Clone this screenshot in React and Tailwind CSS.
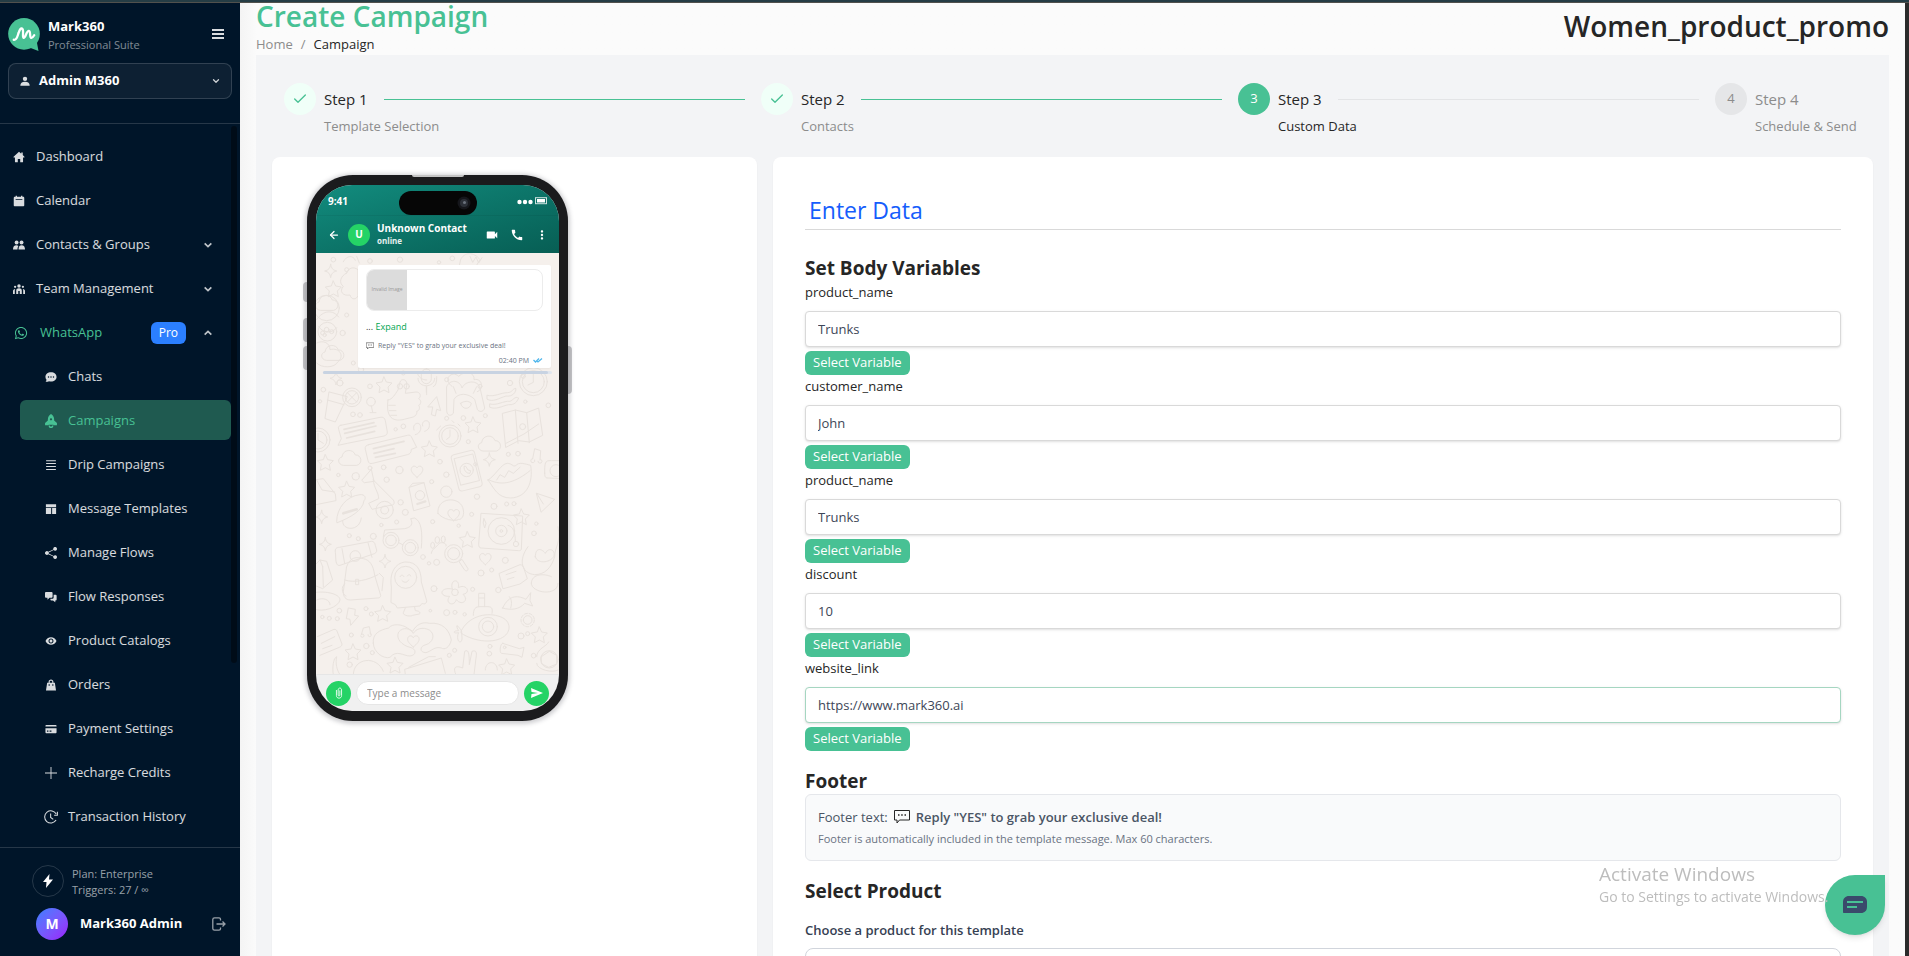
import React from 'react'
import { FaWhatsapp } from 'react-icons/fa'
import { BsShareFill } from 'react-icons/bs'
import { MdCall, MdMoreVert, MdVideocam, MdVisibility } from 'react-icons/md'
import { ArrowLeft, Check, ChevronDown } from 'lucide-react'

const Glyph = ({ children, className = 'h-3.5 w-3.5' }) => (
  <svg viewBox="0 0 16 16" fill="currentColor" className={`p-px ${className}`} aria-hidden="true">
    {children}
  </svg>
)

const HomeIcon = () => (
  <Glyph>
    <path d="M8 1 .8 7.600c-.4.4-.1 1 .4 1H2.600v5.600c0 .5.4.8.8.8h3V10.500h3.200V15h3c.5 0 .8-.4.8-.8V8.600h1.400c.5 0 .8-.6.4-1L13 5.400V2h-2v1.700z" />
  </Glyph>
)

const CalendarIcon = () => (
  <Glyph>
    <path
      fillRule="evenodd"
      d="M3.500 1h1.800v1.200h5.400V1h1.800v1.200h1c.8 0 1.500.7 1.500 1.500v9.800c0 .8-.7 1.500-1.500 1.500h-11c-.8 0-1.500-.7-1.500-1.500V3.700c0-.8.7-1.500 1.500-1.500h1zM3.500 5.500v1.300h9V5.500z"
    />
  </Glyph>
)

const UsersIcon = () => (
  <Glyph>
    <circle cx="4.800" cy="4.600" r="2.600" />
    <circle cx="11.400" cy="4.600" r="2.600" />
    <path d="M0 14c0-3.600 1.600-5.600 4.600-5.600 1.100 0 2 .3 2.700.8C6.300 10.400 6 12 6 14z" />
    <path d="M7.400 14c0-3.600 1.200-5.600 4.100-5.600S16 10.400 16 14z" />
  </Glyph>
)

const TeamIcon = () => (
  <Glyph>
    <circle cx="8" cy="4" r="2.300" />
    <circle cx="2.800" cy="5" r="1.500" />
    <circle cx="13.200" cy="5" r="1.500" />
    <path d="M4.300 14.500V10c0-1.800 1.400-3 3.700-3s3.700 1.200 3.700 3v4.500H9V10.800H7v3.700z" />
    <path d="M0 14.500v-3.600c0-1.800 1-2.900 3-3-.4.700-.6 1.500-.6 2.400v4.200zM16 14.500v-3.600c0-1.800-1-2.900-3-3 .4.700.6 1.500.6 2.400v4.200z" />
  </Glyph>
)

const ChatDotsIcon = () => (
  <Glyph>
    <path
      fillRule="evenodd"
      d="M8 1.700c4.300 0 7.400 2.700 7.400 6.200S12.300 14 8 14c-.9 0-1.800-.1-2.600-.4-1.300.7-2.900 1-4.600.8.700-.9 1.200-1.700 1.200-2.600C1.100 10.800.6 9.400.6 7.900c0-3.500 3.100-6.200 7.400-6.200zM4.700 6.900a1 1 0 1 0 0 2 1 1 0 0 0 0-2zm3.300 0a1 1 0 1 0 0 2 1 1 0 0 0 0-2zm3.300 0a1 1 0 1 0 0 2 1 1 0 0 0 0-2z"
    />
  </Glyph>
)

const RocketIcon = () => (
  <svg viewBox="0 0 16 16" fill="currentColor" className="h-3.5 w-3.5" aria-hidden="true">
    <path
      fillRule="evenodd"
      d="M8 0c2.200 1.300 3.600 3.500 3.600 6.200v1.200l3.200 3v2.400h-3.500l-.8-.5h-5l-.8.500H1.200v-2.400l3.200-3V6.200C4.400 3.500 5.800 1.300 8 0zm0 4.800A1.300 1.300 0 1 0 8 7.400a1.300 1.300 0 0 0 0-2.600z"
    />
    <path d="M5.200 13h1.500c0 .8.500 1.400 1.300 1.400S9.300 13.800 9.300 13h1.500c0 1.800-1.200 3-2.800 3s-2.800-1.200-2.800-3z" />
  </svg>
)

const LinesIcon = () => (
  <Glyph>
    <path d="M1.500 1.500h13v1.400h-13zM1.500 5.400h13v1.400h-13zM1.500 9.300h13v1.400h-13zM1.500 13.200h13v1.400h-13z" />
  </Glyph>
)

const TemplateIcon = () => (
  <Glyph>
    <path d="M1.200 1.500h13.600v4H1.200zM1.200 6.800h7v8h-7zM9.500 6.800h5.300v8H9.500z" />
  </Glyph>
)

const ResponsesIcon = () => (
  <Glyph>
    <path d="M1.200 1.200h7.600c.8 0 1.300.5 1.300 1.300v5.300c0 .8-.5 1.300-1.300 1.300H6l-2.700 2.500V9.100H1.200C.5 9.100 0 8.600 0 7.800V2.500c0-.8.500-1.300 1.200-1.300z" />
    <path d="M11.500 5h2.700c.8 0 1.300.5 1.300 1.300v4.900c0 .8-.5 1.300-1.300 1.300h-.5V15l-3-2.500H8.500c-.8 0-1.300-.5-1.300-1.300v-.8h2.500c1 0 1.800-.8 1.800-1.800z" />
  </Glyph>
)

const OrdersIcon = () => (
  <Glyph>
    <path
      fillRule="evenodd"
      d="M4.800 5V3.700C4.800 2 6.200.7 8 .7s3.200 1.300 3.200 3V5h1.900l1.600 10.300H1.300L2.900 5zm1.500 0h3.400V3.700c0-.9-.7-1.500-1.700-1.500s-1.700.6-1.700 1.500zM4.800 7v2h1.500V7zm4.900 0v2h1.500V7z"
    />
  </Glyph>
)

const CardIcon = () => (
  <Glyph>
    <path
      fillRule="evenodd"
      d="M2 2.500h12c.8 0 1.400.5 1.400 1.300v1H.6v-1c0-.8.6-1.300 1.400-1.300zM.6 7h14.800v5.400c0 .8-.6 1.400-1.400 1.400H2c-.8 0-1.400-.6-1.400-1.400zm2 3v1.500h2V10zm3.500 0v1.500h2.500V10z"
    />
  </Glyph>
)

const PlusIcon = () => (
  <Glyph>
    <path d="M7.400 0h1.200v7.400H16v1.200H8.600V16H7.400V8.600H0V7.400h7.400z" />
  </Glyph>
)

const HistoryIcon = () => (
  <svg viewBox="0 0 16 16" fill="none" stroke="currentColor" strokeWidth="1.200" className="h-3.5 w-3.5" aria-hidden="true">
    <path d="M13.800 11.500A7 7 0 1 1 14 4.700" />
    <path d="M15.300 2v4h-3.700" />
    <path d="M7.600 4v4.500l3 2.200" />
  </svg>
)

const menuItems = [
  { icon: HomeIcon, label: 'Dashboard' },
  { icon: CalendarIcon, label: 'Calendar' },
  { icon: UsersIcon, label: 'Contacts & Groups', expandable: true },
  { icon: TeamIcon, label: 'Team Management', expandable: true },
]

const whatsappItems = [
  { icon: ChatDotsIcon, label: 'Chats' },
  { icon: RocketIcon, label: 'Campaigns', active: true },
  { icon: LinesIcon, label: 'Drip Campaigns' },
  { icon: TemplateIcon, label: 'Message Templates' },
  { icon: BsShareFill, label: 'Manage Flows' },
  { icon: ResponsesIcon, label: 'Flow Responses' },
  { icon: MdVisibility, label: 'Product Catalogs' },
  { icon: OrdersIcon, label: 'Orders' },
  { icon: CardIcon, label: 'Payment Settings' },
  { icon: PlusIcon, label: 'Recharge Credits' },
  { icon: HistoryIcon, label: 'Transaction History' },
]

const steps = [
  { title: 'Step 1', description: 'Template Selection', status: 'finish' },
  { title: 'Step 2', description: 'Contacts', status: 'finish' },
  { title: 'Step 3', description: 'Custom Data', status: 'process' },
  { title: 'Step 4', description: 'Schedule & Send', status: 'wait' },
]

const variables = [
  { name: 'product_name', value: 'Trunks' },
  { name: 'customer_name', value: 'John' },
  { name: 'product_name', value: 'Trunks' },
  { name: 'discount', value: '10' },
  { name: 'website_link', value: 'https://www.mark360.ai', focused: true },
]

const Chevron = ({ up }) => (
  <svg
    viewBox="0 0 12 12"
    fill="none"
    stroke="currentColor"
    strokeWidth="2"
    className={`h-3 w-3 p-px text-white/75 ${up ? 'rotate-180' : ''}`}
    aria-hidden="true"
  >
    <path d="M2 4l4 4 4-4" />
  </svg>
)

const Logo = () => (
  <svg viewBox="0 0 96 100" className="h-[33px] w-8" aria-hidden="true">
    <circle cx="48" cy="48" r="48" fill="#48c194" />
    <path d="M60 88l32 12-6-32z" fill="#48c194" />
    <path
      d="M17 66c10 2 11-12 15-22 5-15 12-16 13-5 1 9-2 20 2 21 6 1 8-22 16-21 6 1 1 20 7 21 4 1 6-3 9-8"
      fill="none"
      stroke="#fff"
      strokeWidth="7"
      strokeLinecap="round"
      strokeLinejoin="round"
    />
  </svg>
)

const Sidebar = () => (
  <aside className="flex w-60 shrink-0 flex-col bg-[#001529] text-[13px] text-white/85">
    <div className="border-b border-white/15 px-2 pt-3 pb-6">
      <div className="flex items-center">
        <Logo />
        <div className="ml-2 flex-1">
          <div className="text-[13px] leading-[22px] font-bold text-white">Mark360</div>
          <div className="text-[11px] leading-4 text-white/50">Professional Suite</div>
        </div>
        <button type="button" aria-label="Toggle menu" className="mr-2 text-white/85">
          <svg viewBox="0 0 12 12" fill="currentColor" className="h-3 w-3" aria-hidden="true">
            <path d="M0 1h12v2H0zM0 5h12v2H0zM0 9h12v2H0z" />
          </svg>
        </button>
      </div>
      <button
        type="button"
        className="mt-2.5 flex h-9 w-full items-center rounded-lg border border-white/15 bg-white/5 px-2.5 text-white"
      >
        <Glyph className="h-3 w-3 text-white/85">
          <circle cx="8" cy="4.500" r="3.500" />
          <path d="M.5 15.500C.5 11.500 3 9 8 9s7.500 2.500 7.500 6.500z" />
        </Glyph>
        <span className="ml-2 flex-1 text-left font-bold">Admin M360</span>
        <ChevronDown className="h-2.5 w-2.5 text-white/80" strokeWidth={3} />
      </button>
    </div>

    <div className="flex min-h-0 flex-1">
      <nav className="min-w-0 flex-1 overflow-hidden pt-3">
        <ul className="space-y-1">
          {menuItems.map((item) => {
            const Icon = item.icon
            return (
              <li key={item.label}>
                <a href="#" className="flex h-10 items-center gap-2.5 pt-px pr-[17px] pl-3">
                  <Icon />
                  <span className="flex-1">{item.label}</span>
                  {item.expandable && <Chevron />}
                </a>
              </li>
            )
          })}
          <li>
            <a href="#" className="flex h-10 items-center gap-3 pt-px pr-[17px] pl-3.5 text-[#48c194]">
              <FaWhatsapp className="h-3.5 w-3.5" />
              <span className="flex-1">WhatsApp</span>
              <span className="mr-1 rounded-md bg-[#2b7fff] px-2 text-xs leading-[22px] text-white">Pro</span>
              <Chevron up />
            </a>
          </li>
          {whatsappItems.map((item) => {
            const Icon = item.icon
            return (
              <li key={item.label} className="pl-5">
                <a
                  href="#"
                  className={`flex h-10 items-center gap-2.5 rounded-md pt-px pl-6 ${
                    item.active ? 'bg-[#1f5a50] text-[#48c194]' : ''
                  }`}
                >
                  <Icon className="h-3.5 w-3.5 p-px" />
                  <span>{item.label}</span>
                </a>
              </li>
            )
          })}
        </ul>
      </nav>
      <div className="mt-0.5 h-[537px] w-1.5 rounded-full bg-black/40" />
      <div className="w-[3px]" />
    </div>

    <div className="border-t border-white/15 pt-4 pb-4">
      <div className="flex items-center gap-2 pl-8">
        <span className="flex h-8 w-8 items-center justify-center rounded-full border border-white/15">
          <svg viewBox="0 0 12 14" fill="#fff" className="h-3.5 w-3" aria-hidden="true">
            <path d="M7.500 0L1 8h3.500L4 14l7-8.500H7z" />
          </svg>
        </span>
        <div className="pt-0.5 text-[11px] leading-4 text-white/60">
          <div>Plan: Enterprise</div>
          <div>Triggers: 27 / ∞</div>
        </div>
      </div>
      <div className="mt-2.5 flex items-center pr-3.5 pl-9">
        <span className="flex h-8 w-8 items-center justify-center rounded-full bg-linear-to-br from-[#2b7fff] to-[#9810fa] text-sm font-bold text-white">
          M
        </span>
        <span className="ml-3 flex-1 font-bold text-white">Mark360 Admin</span>
        <button type="button" aria-label="Log out" className="text-white/60">
          <svg viewBox="0 0 14 14" fill="none" stroke="currentColor" strokeWidth="1.300" className="h-3.5 w-3.5" aria-hidden="true">
            <path d="M8.500 3.500V2.200C8.500 1.300 8 .8 7 .8H2.500C1.500.8.8 1.500.8 2.500v9c0 1 .7 1.700 1.700 1.700H7c1 0 1.500-.5 1.500-1.400v-1.300M4.500 7h8.300M10.500 4.500L13 7l-2.500 2.500" />
          </svg>
        </button>
      </div>
    </div>
  </aside>
)

const StepBadge = ({ status, number }) => {
  if (status === 'finish') {
    return (
      <span className="flex h-8 w-8 shrink-0 items-center justify-center rounded-full bg-[#f0fff8] text-[#48c194]">
        <Check className="h-4 w-4" strokeWidth={2} />
      </span>
    )
  }
  return (
    <span
      className={`flex h-8 w-8 shrink-0 items-center justify-center rounded-full text-[13px] ${
        status === 'process' ? 'bg-[#48c194] text-white' : 'bg-[#e5e6e8] text-[#8c8c8c]'
      }`}
    >
      {number}
    </span>
  )
}

const Steps = () => (
  <ol className="flex gap-4 px-7">
    {steps.map((step, index) => {
      const last = index === steps.length - 1
      return (
        <li key={step.title} className={`flex gap-2 ${last ? 'min-w-[146px]' : 'flex-1'}`}>
          <StepBadge status={step.status} number={index + 1} />
          <div className="min-w-0 flex-1">
            <div className="flex h-8 items-center gap-4">
              <span className={`text-[15px] whitespace-nowrap ${step.status === 'wait' ? 'text-[#8c8c8c]' : 'text-[#262626]'}`}>
                {step.title}
              </span>
              {!last && (
                <span className={`h-px flex-1 ${step.status === 'finish' ? 'bg-[#48c194]' : 'bg-[#e3e4e6]'}`} />
              )}
            </div>
            <div
              className={`text-[13px] leading-[22px] whitespace-nowrap ${
                step.status === 'process' ? 'text-[#262626]' : 'text-[#8c8c8c]'
              }`}
            >
              {step.description}
            </div>
          </div>
        </li>
      )
    })}
  </ol>
)

const STAR = 'M0-24l7 15 17 3-12 12 3 17-15-8-15 8 3-17-12-12 17-3z'
const HEART = 'M0 18C-12 8-19 0-17-8c2-9 13-10 17-2 4-8 15-7 17 2C19 0 12 8 0 18z'
const SPARK = 'M0-20c2 12 6 17 18 20-12 3-16 8-18 20-2-12-6-17-18-20 12-3 16-8 18-20z'
const CLOUD = 'M-22 22c-16-2-18-22-3-25 2-24 34-26 40-6 18-2 24 26 5 31z'

const shapes = [
  [STAR, 282, 396], [STAR, 549, 516], [STAR, 418, 588], [STAR, 106, 629], [STAR, 170, 709],
  [STAR, 532, 860], [STAR, 694, 792], [STAR, 278, 1082], [STAR, 189, 1197], [STAR, 315, 1237],
  [STAR, 748, 1146], [STAR, 650, 1242], [STAR, 130, 108],
  [HEART, 381, 655], [HEART, 586, 917], [HEART, 491, 785], [HEART, 370, 1164],
  [SPARK, 598, 620], [SPARK, 285, 925], [SPARK, 106, 874], [SPARK, 95, 792], [SPARK, 122, 54], [SPARK, 138, 376],
  [CLOUD, 181, 615], [CLOUD, 600, 572], [CLOUD, 112, 150], [CLOUD, 130, 300],
]

const dots = [
  [90, 445, 5], [189, 484, 7], [210, 486, 7], [317, 529, 5], [340, 520, 7], [470, 496, 6], [520, 495, 7], [586, 488, 6],
  [706, 446, 5], [775, 457, 7], [535, 566, 6], [450, 626, 7], [556, 634, 5], [655, 604, 6], [684, 602, 7], [145, 666, 5],
  [197, 670, 11], [240, 645, 6], [281, 643, 7], [328, 651, 11], [290, 680, 8], [469, 665, 8], [425, 686, 6], [561, 731, 8],
  [612, 760, 9], [650, 753, 6], [672, 752, 6], [332, 748, 8], [346, 778, 9], [320, 807, 6], [274, 816, 5], [428, 806, 6],
  [506, 818, 5], [545, 784, 6], [178, 848, 6], [205, 857, 6], [250, 850, 9], [732, 841, 7], [739, 812, 5], [399, 912, 7],
  [440, 928, 9], [417, 931, 5], [573, 960, 9], [605, 951, 6], [646, 922, 9], [432, 1007, 9], [548, 1009, 6], [625, 1011, 8],
  [148, 1073, 7], [142, 1097, 6], [118, 1096, 6], [97, 1092, 5], [228, 1067, 6], [244, 1083, 6], [421, 1073, 4], [470, 1079, 9],
  [495, 1078, 6], [524, 1084, 5], [184, 1146, 6], [229, 1179, 8], [247, 1199, 6], [494, 1192, 6], [478, 1207, 6], [693, 1149, 9],
  [713, 1142, 6], [600, 1180, 6], [598, 1202, 7], [731, 1208, 7], [179, 1235, 8], [100, 410, 7], [240, 400, 7], [350, 400, 8],
  [130, 20, 7], [240, 24, 7], [330, 20, 8], [170, 50, 6], [447, 28, 5], [487, 16, 7], [170, 186, 6], [158, 240, 8],
  [190, 330, 6], [213, 350, 8], [150, 390, 9], [110, 230, 7], [98, 240, 6], [125, 236, 6], [104, 246, 5], [340, 360, 6],
  [330, 400, 8], [470, 380, 6], [570, 400, 6], [660, 390, 8], [700, 370, 6],
]

// Line drawings scattered over the chat wallpaper, on a 3x grid of the chat area.
const ChatWallpaper = () => (
  <svg
    viewBox="0 0 729 1263"
    preserveAspectRatio="xMidYMid slice"
    className="absolute inset-0 h-full w-full"
    fill="none"
    stroke="#e8e2dd"
    strokeWidth="3"
    strokeLinejoin="round"
    strokeLinecap="round"
    aria-hidden="true"
  >
    <g transform="translate(-78 0)">
      {shapes.map(([d, x, y]) => (
        <path key={`${x}-${y}`} d={d} transform={`translate(${x} ${y})`} />
      ))}
      {dots.map(([x, y, r]) => (
        <circle key={`${x}-${y}`} cx={x} cy={y} r={r} />
      ))}
      {/* doodles beside the message */}
      <path d="M160 26c10-20 30-20 36-4M200 10l8 20M512 20c10-24 40-24 58 0l-18 30c-20 16-40 8-44-10z" />
      <path d="M540 10l8 18 10-16 8 18 10-16" />
      <circle cx="110" cy="165" r="38" />
      <path d="M80 200c20-30 50-30 66-8M86 220c10 20 40 24 54 4" />
      <circle cx="112" cy="236" r="28" />
      <path d="M80 270c20-10 40 0 40 20 30-8 44 20 24 36-10 20-50 20-64 4" />
      <path d="M170 60c-20 10-24 30-10 40-14 16 0 30 20 26 4 16 20 14 24 2V50c-14-10-28-6-34 10z" />
      <rect x="394" y="348" width="30" height="44" rx="15" />
      <path d="M384 376c0 30 50 30 50 0M409 400v18" />
      <path d="M486 400c-30-20 0-50 20-30 20-20 50-10 46 10 26-6 30 30 10 36" />
      <circle cx="730" cy="386" r="42" />
      <circle cx="730" cy="386" r="33" />
      <path d="M730 364v24l-16 8" />
    </g>
    <g transform="translate(-78 381)">
      {/* glass and citrus */}
      <path d="M118 36l54 14-36 76-30-10zM112 60l50 14" />
      <circle cx="186" cy="52" r="28" />
      <circle cx="186" cy="52" r="20" />
      <path d="M172 38l28 28M200 38l-28 28" />
      <circle cx="243" cy="65" r="13" />
      <path d="M244 78l4 18M240 98h18" />
      {/* thumb up */}
      <path d="M294 60c14-2 20-16 30-30l6-24c6-14 24-6 20 10l-4 24 32-4c14 0 16 14 8 20 10 6 6 18 0 20 6 8 0 18-6 18 2 8-4 16-14 18-20 4-40 14-58 4-14-8-18-30-14-56zM296 76h20M298 92h20M302 106h18" />
      <path d="M410 0c-16 0-24-10-28-20M410 20v24M430 20c10-4 10-20 10-30" />
      <path d="M414 80l26-30 12 42-12-4-4 20-12-4 4-22z" />
      {/* cheering face */}
      <path d="M470 20c10-24 40-20 46 4 10-24 50-24 54 0l14 60c-4 14-18 12-22 4l-8-30c-20-20-50-20-62 0l-2 42c-10 12-20 4-20-8zM490 20l8 20M560 20l-10 20" />
      <path d="M512 70c10-8 24-8 32 0-4 20-28 20-32 0z" />
      <path d="M592 46c20 6 40-8 60-8 16 0 18-16 26-12-2 20-20 24-30 22-20 6-40 20-56 10zM600 72c20 6 40-10 60-8 10-4 14-16 26-10-8 20-20 20-30 20-20 4-38 16-56 8z" />
      {/* message banners */}
      <path d="M152 136l118-24c10-2 14 2 16 10l6 34c0 8-4 10-10 12l-110 22-28 6 10-20-8-28c-2-8 0-10 6-12z" />
      <path d="M162 148l90-20M164 160l94-22M170 174l84-20" strokeWidth="5" />
      <path d="M236 194l116-28c8-2 10 0 14 8l14 28-16 6c0 10-4 14-12 16l-104 26c-8 2-12 0-14-8l-8-34c-2-8 2-12 10-14z" />
      <path d="M250 206l92-22M252 220l60-14M256 232l60-12" strokeWidth="5" />
      <path d="M372 150c-8-20 18-28 20-10 2 12-6 22-16 24M398 138c-6-18 20-22 20-6 2 12-6 20-14 22" />
      <circle cx="480" cy="168" r="33" />
      <circle cx="480" cy="168" r="25" />
      <path d="M480 150v20l-10 8M440 150l12-12M504 132l6 6M492 128l-6-6" />
      {/* map */}
      <path d="M638 100l38-10 34 8 36-14 12 82-40 20-32-4-38 20zM676 90l8 100M710 98l8 90M648 190l54-28 44-30" />
      <circle cx="698" cy="140" r="9" />
      <circle cx="84" cy="180" r="36" />
      <circle cx="84" cy="180" r="27" />
      <path d="M84 160v20l16 10" />
      {/* phone with handset */}
      <rect x="494" y="216" width="72" height="112" rx="10" transform="rotate(-14 530 272)" />
      <rect x="502" y="228" width="58" height="82" transform="rotate(-14 530 272)" />
      <circle cx="530" cy="270" r="20" />
      <path d="M522 260c0 14 8 20 18 20l2-8-8-2-6-10z" />
      {/* lips */}
      <path d="M594 300c20-10 40-50 58-50 14 0 16 10 24 8 10-14 30-6 46-2 8 50-10 96-60 98-40 0-50-30-68-54zM598 300c40 20 80 6 122-28M620 300l10-16 14 8 12-20 14 8 20-18" />
      <path d="M728 236l6-30 18 6-2 28M728 236a6 6 0 1 0 6 4M744 244a6 6 0 1 0 8-6" />
      <path d="M764 280c0-30 0-40 20-38h40v54l-50-2c-8 0-10-4-10-14z" />
      <circle cx="798" cy="272" r="18" />
      <path d="M70 300l30-4 36 46 2 20-60 12M80 300l16 30 38 6" />
      {/* scooter */}
      <path d="M140 424c0-40 30-76 70-80 14-2 20 10 12 18-4 30-40 50-80 66zM216 300l28-32 8 36-28 4zM250 300l60 60c6 10 0 18-10 16l-54 12-10-18 30-14c0-20-14-30-16-56z" />
      <path d="M160 400l40-12" strokeWidth="8" />
      <circle cx="284" cy="390" r="26" />
      <circle cx="284" cy="390" r="12" />
      <path d="M158 424c0 30 52 30 56-10" />
      {/* passport, muffin */}
      <path d="M358 322l44-14 18 70-48 14zM358 322l10-12 34-2" />
      <circle cx="390" cy="346" r="14" />
      <path d="M382 372l24-8" strokeWidth="7" />
      <circle cx="469" cy="335" r="17" />
      <path d="M444 400c-6-50 70-54 76-10 4 20-8 30-14 28-10 8-50 0-62-18z" />
      {/* record player */}
      <path d="M574 400l124 8-4 100c-2 4-4 4-8 4l-112-8c-6 0-8-4-8-10z" />
      <circle cx="634" cy="453" r="40" />
      <circle cx="634" cy="453" r="17" />
      <circle cx="634" cy="453" r="4" />
      <path d="M654 436c16 4 22 20 22 48" />
      <circle cx="678" cy="492" r="8" />
      <path d="M582 416l6 14-4 14-4-14z" />
      <path d="M740 340l54 18-40 38zM740 340l20 32" />
      {/* binoculars */}
      <circle cx="303" cy="481" r="24" />
      <circle cx="303" cy="481" r="16" />
      <circle cx="361" cy="503" r="24" />
      <circle cx="361" cy="503" r="16" />
      <path d="M280 470l4-20 60-4c20-4 26-14 18-30l12-2c20 10 24 40 20 90M326 488l12 6" />
      {/* magnifier and paw */}
      <circle cx="491" cy="521" r="27" />
      <circle cx="491" cy="521" r="18" />
      <path d="M508 544l8-6 18 28c0 8-6 8-10 4z" />
      <ellipse cx="442" cy="480" rx="7" ry="10" />
      <ellipse cx="460" cy="478" rx="6" ry="10" />
      <ellipse cx="428" cy="496" rx="6" ry="9" />
      <path d="M424 520c0-12 18-20 24-30 10-6 24 2 20 8" />
      {/* backpack */}
      <path d="M136 516c-2-10 4-14 12-14l96-18c8 0 10 4 12 12l4 14c0 8-4 10-10 12l-100 34c-8 2-10-4-12-12zM156 506l8 44M234 488l12 44" />
      <path d="M170 560c10-30 30-30 50-24 20 4 30 20 34 50l18 60c0 6-4 8-10 8l-80 6c-16 0-22-10-22-24zM164 600c30 10 70 0 100-16M164 612l-6 8c-4 14 4 26 10 28M268 580l12 12-4 40" />
      <circle cx="196" cy="528" r="16" />
      <rect x="198" y="598" width="8" height="16" />
      {/* bundled figure */}
      <path d="M304 620c-8-50 20-74 44-74 30 0 46 20 46 60l16 56c0 12-10 10-14 8l-6 8-68 6-6-10-12-6z" />
      <circle cx="347" cy="592" r="33" />
      <path d="M330 590c4-6 8-6 12 0M352 588c4-6 8-6 10 0M336 602c8 8 16 6 20-2M346 684l-6 14c-2 10 24 12 28 8l20-4c6-4-2-10-12-10l-2-10" />
      {/* flower */}
      <circle cx="495" cy="637" r="10" />
      <path d="M487 627c-10-30 24-34 18-4 24-14 40 16 14 20 20 18-4 36-20 16-8 24-36 10-20-10-34 2-30-30 8-22z" />
      <path d="M628 580l62-26c8 0 10 6 12 12l10 30-22 16-50 14zM648 584l30-10M652 598l20-6" />
      {/* submarine */}
      <path d="M514 752c20-40 70-56 110-44 40 10 40 44 20 60-30 24-90 18-130-8zM550 706c0-20 6-26 20-26h24c14 0 14 10 12 20M566 680v-40h18v40M566 654h18" />
      <circle cx="594" cy="740" r="28" />
      <circle cx="594" cy="740" r="17" />
      <path d="M514 752c-20-30-14-8-8 0-20 0-16 10 0 6-10 20 6 40 10 20z" />
      <path d="M638 684c20-44 50-36 70-26l14-20-2 24 8 16-24-8c-16 18-40 22-66 14zM658 650c8 10 8 20 4 34" />
      <path d="M714 500c-30 40-20 80 20 84 30 0 50-20 60-54 0-30 20-40 10-90M736 530c0-30 20-24 30-10 10-20 30-10 26 6-4 20-50 30-56 4z" />
      <path d="M724 610c0-30 40-30 60-20M724 610c0 30 80 40 80 0M700 720a13 13 0 1 1 26 0 13 13 0 1 1-26 0" />
      <circle cx="713" cy="720" r="20" strokeDasharray="9 5" />
      <path d="M70 560l20-20 20 4 18 56-30 26-24-10zM90 540l8 20M98 560l2 60" />
      <path d="M60 640c40-10 90 0 90 20-4 20-50 40-80 26M80 660c20-10 40 0 40 14" />
      <path d="M176 684l20 4-2 18 12 2-24 28-2-18-10-2z" />
      <path d="M214 764l6-20 18-4 4 22M212 768a5 5 0 1 0 4-6M234 764a5 5 0 1 0 6-4" />
      {/* heart hands */}
      <path d="M250 790c-4-30 20-40 46-46 10-14 40-12 56 0l16 10c10-20 30-30 50-24 40-4 60 20 66 50-6 24-20 30-30 24-20-6-30 10-46 14-20 0-20-20 0-24 20-6 30-30 10-44-20-10-40-4-48 10-10-16-30-20-44-4-10 20 10 40 34 46 20 4 20 24 0 26-20 0-40-20-60 4-20 6-50-16-50-42z" />
      <path d="M82 770l50-22c6 0 8 2 10 8l14 36c0 6-4 8-8 10l-58 24M94 790l40-20M98 806l28-10" />
      <path d="M638 790l50 16 14-4-6 30-12-6-50-6c-6-2-4-30 4-30z" />
      <circle cx="644" cy="802" r="4" />
      <circle cx="778" cy="838" r="26" />
      <path d="M740 830c0-24 30-30 36-44M740 850c0 20 50 30 64 20M754 830l24-16 22 12v26l-24 10-20-10z" />
      {/* bottom edge */}
      <path d="M190 884c0-50 70-60 90-10M346 884l-2-16 110-34 12 46M356 862l60-32h20M498 884c-10-20-4-30 20-20l6-50c10-6 14 0 14 40l8-40c10-4 16 0 12 20l-6 50M586 870c0-30 36-30 36 0M130 884c-4-20 0-50 10-54-4 20 0 40 10 54" />
    </g>
  </svg>
)

const SpeechBubble = ({ className }) => (
  <svg viewBox="0 0 16 14" fill="none" stroke="#262626" strokeWidth="1" className={`shrink-0 ${className}`} aria-hidden="true">
    <path d="M.5.500h15v9.500H5.500L3 13v-3H.5z" />
    <path d="M4 5h1.500M7.200 5h1.500M10.500 5H12" strokeWidth="1.500" />
  </svg>
)

const PhonePreview = () => (
  <div className="relative mt-[18px] ml-[31px] w-[269px] px-1">
    {/* side buttons */}
    <span className="absolute top-[107px] left-0 h-5 w-1 rounded-l-sm bg-[#c6c6c8]" />
    <span className="absolute top-[143px] left-0 h-6 w-1 rounded-l-sm bg-[#c6c6c8]" />
    <span className="absolute top-[171px] left-0 h-6 w-1 rounded-l-sm bg-[#c6c6c8]" />
    <span className="absolute top-[171px] right-0 h-12 w-1 rounded-r-sm bg-[#c6c6c8]" />
    <div className="relative flex h-[546px] flex-col rounded-[46px] bg-[#1b1b1d] px-[9px] py-2.5 shadow-[0_1px_4px_2px_rgba(60,60,70,0.25)]">
      <span className="absolute top-0 left-1/2 h-0.5 w-[52px] -translate-x-1/2 rounded-b-sm bg-[#c4c4c4]" />
      <div className="flex min-h-0 flex-1 flex-col overflow-hidden rounded-[36px] bg-[#f0f0f0]">
        <div className="relative bg-linear-to-br from-[#128c7e] to-[#075e54] text-white">
          <div className="flex h-[31px] items-center justify-between border-b border-black/5 px-3 pt-0.5 text-[10px] font-bold">
            <span>9:41</span>
            <svg viewBox="0 0 30 8" className="h-2 w-[30px]" aria-hidden="true">
              <g fill="#fff">
                <circle cx="2.500" cy="5" r="2.200" />
                <circle cx="8" cy="5" r="2.200" />
                <circle cx="13.500" cy="5" r="2.200" />
                <rect x="20" y="2" width="8" height="3.500" />
              </g>
              <rect x="18.500" y=".7" width="11" height="6" fill="none" stroke="#fff" strokeOpacity=".8" />
            </svg>
          </div>
          {/* camera island */}
          <span className="absolute top-1.5 left-1/2 flex h-6 w-[78px] -translate-x-1/2 items-center justify-end rounded-full bg-[#060606] px-1.5">
            <svg viewBox="0 0 14 14" className="h-3.5 w-3.5" aria-hidden="true">
              <circle cx="7" cy="7" r="6.500" fill="#15161b" />
              <circle cx="7" cy="7" r="4" fill="#2c3038" />
              <circle cx="7.500" cy="6.500" r="1.500" fill="#6a717c" />
            </svg>
          </span>
          <div className="flex h-[37px] items-center pr-2.5 pl-3">
            <ArrowLeft className="h-3 w-3" strokeWidth={2.500} />
            <span className="ml-2 flex h-[22px] w-[22px] items-center justify-center rounded-full bg-[#25d366] text-[10px] font-bold">
              U
            </span>
            <div className="ml-[7px] flex-1">
              <div className="text-[10px] leading-[13px] font-bold whitespace-nowrap">Unknown Contact</div>
              <div className="text-[8px] leading-3 font-bold text-white/90">online</div>
            </div>
            <div className="flex items-center gap-[11px]">
              <MdVideocam className="h-3.5 w-3.5" />
              <MdCall className="h-3.5 w-3.5" />
              <MdMoreVert className="h-3.5 w-3.5" />
            </div>
          </div>
        </div>

        <div className="relative flex-1 bg-[#f5f0ec]">
          <ChatWallpaper />
          <div className="relative mt-3 mr-2 ml-[42px] rounded-xs bg-white px-2 pt-1 shadow-xs">
            <div className="h-[42px] overflow-hidden rounded-lg border border-[#ececec]">
              <div className="flex h-full w-10 items-center justify-center bg-[#dcdcdc] text-[5px] whitespace-nowrap text-[#999]">
                Invalid Image
              </div>
            </div>
            <div className="mt-2 text-[9px] leading-4 text-[#333]">
              ... <a href="#" className="text-[#00a651]">Expand</a>
            </div>
            <div className="mt-1 flex items-center gap-1 text-[7px] leading-[14px] whitespace-nowrap text-[#6a7282]">
              <SpeechBubble className="h-2 w-2" />
              Reply "YES" to grab your exclusive deal!
            </div>
            <div className="flex items-center justify-end gap-1 text-[7px] leading-[15px] text-[#6a7282]">
              02:40 PM
              <svg viewBox="0 0 20 10" fill="none" stroke="#4fb6ec" strokeWidth="2.500" className="h-[5px] w-2.5" aria-hidden="true">
                <path d="M1 4l4 4 7-7M8 6l2 2 8-7" />
              </svg>
            </div>
          </div>
          <div className="relative mx-[7px] mt-[3px] h-[3px] rounded-full bg-[#e0e6ee]">
            <div className="mr-1 h-full rounded-full bg-[#c8d3e2]" />
          </div>
        </div>

        <div className="flex h-[37px] items-center gap-[5px] border-t border-[#e6e6e6] px-2.5">
          <button type="button" aria-label="Attach file" className="flex h-[25px] w-[25px] items-center justify-center rounded-full bg-[#25d366] text-white">
            <svg viewBox="0 0 8 14" fill="none" stroke="currentColor" className="h-3 w-2" aria-hidden="true">
              <path d="M1 3.500v6.500c0 4 6 4 6 0V3.500c0-3-4-3-4 0v6c0 1.400 2 1.400 2 0V4" />
            </svg>
          </button>
          <input
            type="text"
            aria-label="Message"
            placeholder="Type a message"
            className="h-6 min-w-0 flex-1 rounded-full border border-[#e6e6e6] bg-white px-2.5 text-[10px] placeholder:text-[#8c8c8c]"
          />
          <button type="button" aria-label="Send" className="flex h-[25px] w-[25px] items-center justify-center rounded-full bg-[#25d366] text-white">
            <svg viewBox="0 0 12 10" fill="currentColor" className="h-2.5 w-3" aria-hidden="true">
              <path d="M0 0l12 5-12 5 .500-4L7 5 .500 4z" />
            </svg>
          </button>
        </div>
      </div>
    </div>
  </div>
)

const VariableField = ({ id, name, value, focused }) => (
  <div className="text-[13px]">
    <label htmlFor={id} className="block leading-[22px] text-[#262626]">
      {name}
    </label>
    <input
      id={id}
      type="text"
      defaultValue={value}
      className={`mt-2 block h-9 w-full rounded-sm border bg-white px-3 text-[#3d4657] shadow-sm outline-none ${
        focused ? 'border-[#a5d6c1]' : 'border-[#d9d9d9]'
      }`}
    />
    <button type="button" className="mt-1 block h-6 rounded-md bg-[#48c194] px-2 text-white">
      Select Variable
    </button>
  </div>
)

const DataForm = () => (
  <form className="px-8 pt-8 text-[#262626]">
    <h2 className="h-[41px] border-b border-[#d9d9d9] pt-1 pl-1 text-[23px] leading-[34px] font-medium text-[#155dfc]">
      Enter Data
    </h2>
    <h3 className="mt-6 text-[19px] leading-7 font-bold">Set Body Variables</h3>
    <div className="-mt-px">
      {variables.map((variable, index) => (
        <VariableField key={index} id={`variable-${index}`} {...variable} />
      ))}
    </div>

    <h3 className="mt-4 text-[19px] leading-7 font-bold">Footer</h3>
    <div className="-mt-px rounded-md border border-[#e5e7eb] bg-[#f9fafb] px-3 pt-[11px] pb-2.5">
      <div className="flex items-center gap-1.5 text-[13px] leading-[22px] text-[#4a5565]">
        Footer text:
        <SpeechBubble className="h-3.5 w-4" />
        <span className="font-semibold">Reply "YES" to grab your exclusive deal!</span>
      </div>
      <div className="text-[11px] leading-[22px] text-[#6a7282]">
        Footer is automatically included in the template message. Max 60 characters.
      </div>
    </div>

    <h3 className="mt-4 text-[19px] leading-7 font-bold">Select Product</h3>
    <label htmlFor="product" className="mt-[15px] block text-[13px] leading-5 font-semibold text-[#364153]">
      Choose a product for this template
    </label>
    <select id="product" className="mt-2 block h-11 w-full appearance-none rounded-lg border border-[#d1d5dc] bg-white px-3 text-[13px]">
      <option></option>
    </select>
  </form>
)

export default function App() {
  return (
    <div className="flex h-screen flex-col overflow-hidden bg-[#fbfbfb] font-['Open_Sans','Noto_Sans',sans-serif]">
      <div className="h-[3px] shrink-0 border-b border-[#51514d] bg-[#253d45]" />
      <div className="flex min-h-0 flex-1">
        <Sidebar />
        <main className="min-w-0 flex-1 bg-linear-to-r from-[#f4f4f4] to-[#fbfbfb] to-1% px-4">
          <header className="flex h-[52px] items-start justify-between">
            <div>
              <h1 className="text-[28px] leading-[26px] font-semibold text-[#48c194]">Create Campaign</h1>
              <nav aria-label="Breadcrumb" className="mt-1 flex gap-2 text-[13px] leading-[22px] text-[#8c8c8c]">
                <a href="#">Home</a>
                <span>/</span>
                <span className="text-[#262626]">Campaign</span>
              </nav>
            </div>
            <div className="pt-1 text-[28px] leading-[38px] font-semibold text-[#262626]">Women_product_promo</div>
          </header>

          <div className="bg-[#f3f4f6] pt-7">
            <Steps />
            <div className="mt-5 grid grid-cols-[97fr_220fr] gap-4 px-4">
              <section className="rounded-lg bg-white pb-8 shadow-xs">
                <PhonePreview />
              </section>
              <section className="rounded-lg bg-white pb-8 shadow-xs">
                <DataForm />
              </section>
            </div>
          </div>
        </main>
        <div className="w-1 shrink-0 bg-[#2b2b2b]" />
      </div>

      <button
        type="button"
        aria-label="Open chat"
        className="fixed right-6 bottom-[21px] flex h-[60px] w-[60px] items-center justify-center rounded-full rounded-tr-lg bg-[#48c194] shadow-md"
      >
        <svg viewBox="0 0 24 18" className="h-[18px] w-6" aria-hidden="true">
          <path d="M6 0h12c3.500 0 6 2.500 6 6v5c0 3.500-2.500 6-6 6H1c-.6 0-1-.4-1-1V6c0-3.500 2.500-6 6-6z" fill="#3a4a6b" />
          <path d="M4 6h16M4 11h10" stroke="#48c194" strokeWidth="2" />
        </svg>
      </button>
      <div className="pointer-events-none fixed right-[75px] bottom-12 w-[235px] whitespace-nowrap text-[#bdbdbd]">
        <div className="text-[19px] leading-6">Activate Windows</div>
        <div className="text-sm leading-[22px]">Go to Settings to activate Windows.</div>
      </div>
    </div>
  )
}
